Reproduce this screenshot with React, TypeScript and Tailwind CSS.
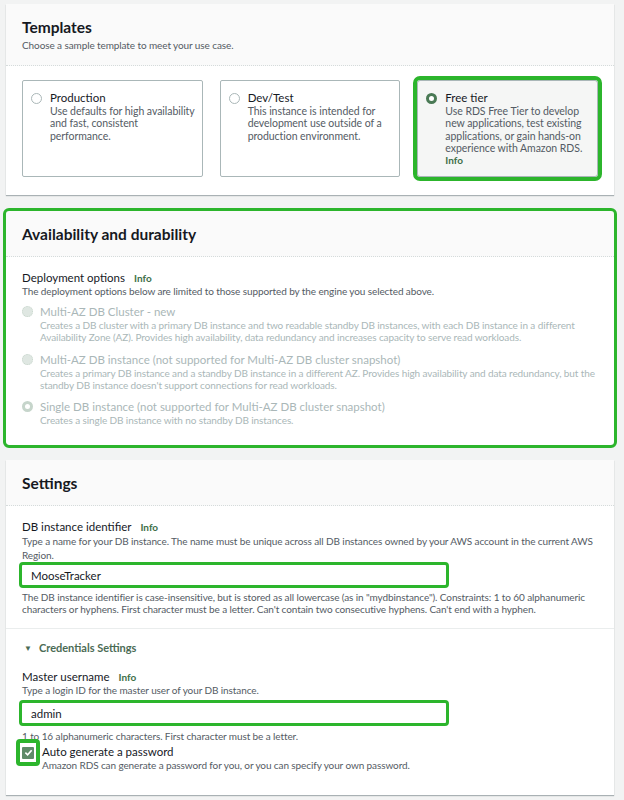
import React from "react";

const green = "border-[#2cb52c]";
const desc = "text-[10px] tracking-[-0.1px] text-[#545b64]";

function Label({ text }: { text: string }) {
  return (
    <div className="flex items-baseline h-[15px] leading-[15px]">
      <span className="text-[11.5px] text-[#16191f]">{text}</span>
      <span className="ml-[9px] text-[10px] font-bold text-[#3d6f48]">Info</span>
    </div>
  );
}

function Panel({
  title,
  sub,
  highlight,
  children,
}: {
  title: string;
  sub?: string;
  highlight?: boolean;
  children: React.ReactNode;
}) {
  return (
    <div
      className={
        "bg-white shadow-[0_1px_1px_rgba(0,28,36,0.3)] " +
        (highlight ? "outline-[3px] outline-solid outline-[#2cb52c] rounded-[3px] outline-offset-0" : "")
      }
    >
      <div className="bg-[#fafafa] border-b border-dotted border-[#d5dbdb] px-4 pt-[14px] pb-[13px]">
        <h2 className="text-[15.5px] leading-[18px] font-bold text-[#16191f]">{title}</h2>
        {sub && <p className={desc + " leading-[14px] mt-[2px]"}>{sub}</p>}
      </div>
      {children}
    </div>
  );
}

function TemplateCard({
  title,
  text,
  selected,
}: {
  title: string;
  text: string;
  selected?: boolean;
}) {
  return (
    <div
      className={
        "h-[97px] rounded-[2px] flex gap-[8px] pl-[8px] pr-[7px] pt-[10px] " +
        (selected
          ? "bg-[#f5f6f5] border border-[#aab7b8] outline-[4px] outline-solid outline-[#2cb52c] rounded-[3px]"
          : "bg-white border border-[#aab7b8]")
      }
    >
      <div
        className={
          "mt-[2px] w-[11px] h-[11px] shrink-0 rounded-full " +
          (selected ? "border-[3.5px] border-[#4a7a55] bg-white" : "border border-[#aab7b8] bg-white")
        }
      />
      <div className="flex flex-col">
        <span className="text-[11.5px] leading-[14px] text-[#16191f]">{title}</span>
        <span className="text-[10.5px] tracking-[-0.05px] leading-[12.3px] text-[#545b64]">{text}</span>
        {selected && <span className="text-[10px] leading-[12.3px] font-bold text-[#3d6f48]">Info</span>}
      </div>
    </div>
  );
}

function DisabledOption({ title, text, checked }: { title: string; text: string; checked?: boolean }) {
  return (
    <div className="flex gap-[7px]">
      <div
        className={
          "mt-[2px] w-[11px] h-[11px] shrink-0 rounded-full bg-[#dfe7e2] " +
          (checked ? "border-[3px] border-[#c6d5cb] bg-white" : "border border-dotted border-[#c6d5cb]")
        }
      />
      <div className="flex flex-col">
        <span className="text-[11.5px] leading-[15px] text-[#aab7b8]">{title}</span>
        <span className="text-[10px] tracking-[-0.1px] leading-[12.3px] text-[#aab7b8]">{text}</span>
      </div>
    </div>
  );
}

export default function App() {
  return (
    <div
      className="min-h-[800px] w-[624px] bg-[#f2f3f3] pl-[6px] pr-[10px] pt-[4px] flex flex-col"
      style={{ fontFamily: "Lato, 'Noto Sans', sans-serif" }}
    >
      <Panel title="Templates" sub="Choose a sample template to meet your use case.">
        <div className="grid grid-cols-3 gap-[17px] px-4 pt-[14px] pb-[18px]">
          <TemplateCard
            title="Production"
            text="Use defaults for high availability and fast, consistent performance."
          />
          <TemplateCard
            title="Dev/Test"
            text="This instance is intended for development use outside of a production environment."
          />
          <TemplateCard
            selected
            title="Free tier"
            text="Use RDS Free Tier to develop new applications, test existing applications, or gain hands-on experience with Amazon RDS."
          />
        </div>
      </Panel>

      <div className="mt-[16px]">
        <Panel title="Availability and durability" highlight>
          <div className="px-4 pt-[13px] pb-[19px]">
            <Label text="Deployment options" />
            <p className={desc + " leading-[13px]"}>
              The deployment options below are limited to those supported by the engine you selected above.
            </p>
            <div className="mt-[6px] flex flex-col gap-[8px]">
              <DisabledOption
                title="Multi-AZ DB Cluster - new"
                text="Creates a DB cluster with a primary DB instance and two readable standby DB instances, with each DB instance in a different Availability Zone (AZ). Provides high availability, data redundancy and increases capacity to serve read workloads."
              />
              <DisabledOption
                title="Multi-AZ DB instance (not supported for Multi-AZ DB cluster snapshot)"
                text="Creates a primary DB instance and a standby DB instance in a different AZ. Provides high availability and data redundancy, but the standby DB instance doesn't support connections for read workloads."
              />
              <DisabledOption
                checked
                title="Single DB instance (not supported for Multi-AZ DB cluster snapshot)"
                text="Creates a single DB instance with no standby DB instances."
              />
            </div>
          </div>
        </Panel>
      </div>

      <div className="mt-[15px]">
        <Panel title="Settings">
          <div className="px-4 pt-[13px] pb-[13px] border-b border-[#eaeded]">
            <Label text="DB instance identifier" />
            <p className={desc + " leading-[14px]"}>
              Type a name for your DB instance. The name must be unique across all DB instances owned by your AWS account in
              the current AWS Region.
            </p>
            <div className={"-ml-[3px] w-[430px] h-[26px] border-[3px] rounded-[4px] bg-white flex items-center px-[9px] " + green}>
              <span className="text-[11.5px] text-[#16191f]">MooseTracker</span>
            </div>
            <p className={desc + " mt-[3px] leading-[12px]"}>
              The DB instance identifier is case-insensitive, but is stored as all lowercase (as in "mydbinstance").
              Constraints: 1 to 60 alphanumeric characters or hyphens. First character must be a letter. Can't contain two
              consecutive hyphens. Can't end with a hyphen.
            </p>
          </div>
          <div className="px-4 pt-[12px] pb-[24px]">
            <div className="flex items-center h-[14px] gap-[7px] text-[11px] leading-[14px] font-bold text-[#4b6b55]">
              <span className="text-[8px] ml-[2px]">▼</span>
              Credentials Settings
            </div>
            <div className="mt-[14px]">
              <Label text="Master username" />
            </div>
            <p className={desc + " leading-[13px]"}>Type a login ID for the master user of your DB instance.</p>
            <div className={"mt-[3px] -ml-[3px] w-[430px] h-[26px] border-[3px] rounded-[4px] bg-white flex items-center px-[9px] " + green}>
              <span className="text-[11.5px] text-[#16191f]">admin</span>
            </div>
            <p className={desc + " mt-[4px] leading-[13px]"}>
              1 to 16 alphanumeric characters. First character must be a letter.
            </p>
            <div className="flex gap-[2px] -ml-[6px] -mt-[4px]">
              <div className={"w-[24px] h-[27px] border-[4px] rounded-[4px] flex items-center justify-center shrink-0 " + green}>
                <div className="w-[12px] h-[12px] bg-[#5e8a68] rounded-[1px] flex items-center justify-center">
                  <svg width="9" height="9" viewBox="0 0 10 10">
                    <path d="M1.5 5.2 L4 7.6 L8.5 2.4" stroke="white" strokeWidth="1.8" fill="none" />
                  </svg>
                </div>
              </div>
              <div className="flex flex-col pt-[6px]">
                <span className="text-[11.5px] leading-[14px] text-[#16191f]">Auto generate a password</span>
                <span className={desc + " leading-[12px]"}>
                  Amazon RDS can generate a password for you, or you can specify your own password.
                </span>
              </div>
            </div>
          </div>
        </Panel>
      </div>
    </div>
  );
}
